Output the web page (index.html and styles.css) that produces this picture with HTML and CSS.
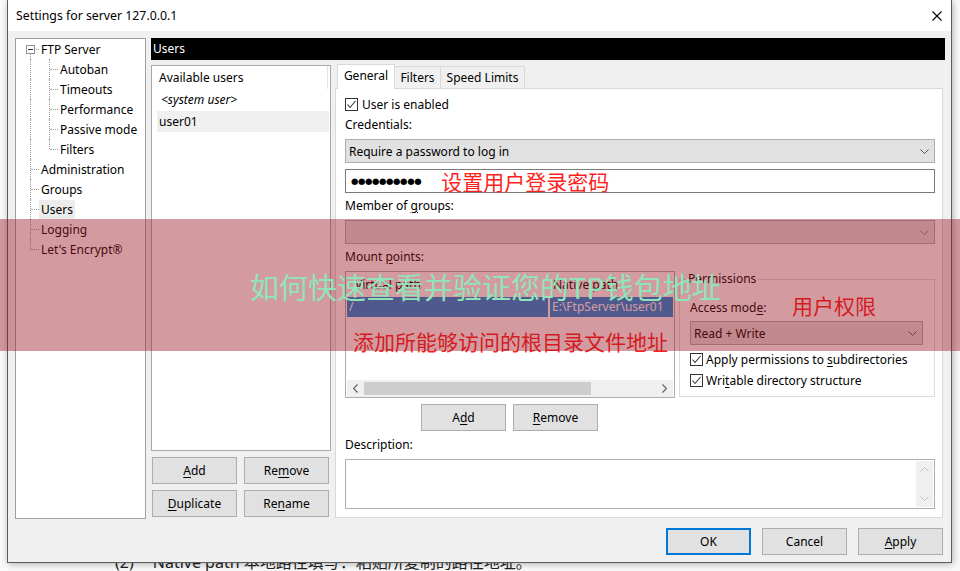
FILE: index.html
```html
<!DOCTYPE html>
<html lang="zh-CN">
<head>
    <meta charset="UTF-8">
    <meta name="viewport" content="width=device-width, initial-scale=1.0">
    <title>Settings for server 127.0.0.1</title>
    <link rel="stylesheet" href="styles.css">
</head>
<body>
    <div class="window">
        <div class="titlebar">
            <span class="title">Settings for server 127.0.0.1</span>
            <svg class="close" viewBox="0 0 10 10"><path d="M0.5 0.5L9.5 9.5M9.5 0.5L0.5 9.5"/></svg>
        </div>

        <div class="client">
            <div class="main">
                <!-- 左侧设置树 -->
                <div class="tree">
                    <div class="node"><span class="g m"><span class="minus"></span></span><span class="label">FTP Server</span></div>
                    <div class="node"><span class="g v"></span><span class="g t"></span><span class="label">Autoban</span></div>
                    <div class="node"><span class="g v"></span><span class="g t"></span><span class="label">Timeouts</span></div>
                    <div class="node"><span class="g v"></span><span class="g t"></span><span class="label">Performance</span></div>
                    <div class="node"><span class="g v"></span><span class="g t"></span><span class="label">Passive mode</span></div>
                    <div class="node"><span class="g v"></span><span class="g l"></span><span class="label">Filters</span></div>
                    <div class="node"><span class="g t"></span><span class="label">Administration</span></div>
                    <div class="node"><span class="g t"></span><span class="label">Groups</span></div>
                    <div class="node"><span class="g t"></span><span class="label selected">Users</span></div>
                    <div class="node"><span class="g t"></span><span class="label">Logging</span></div>
                    <div class="node"><span class="g l"></span><span class="label">Let's Encrypt®</span></div>
                </div>

                <div class="content">
                    <div class="page-title">Users</div>
                    <div class="page-body">
                        <div class="users-col">
                            <div class="users-list">
                                <div class="list-head">Available users</div>
                                <div class="list-item system">&lt;system user&gt;</div>
                                <div class="list-item selected">user01</div>
                            </div>
                            <div class="btn-grid">
                                <button class="btn"><u>A</u>dd</button>
                                <button class="btn">Re<u>m</u>ove</button>
                                <button class="btn"><u>D</u>uplicate</button>
                                <button class="btn">Re<u>n</u>ame</button>
                            </div>
                        </div>

                        <div class="tabs">
                            <div class="tab-strip">
                                <div class="tab active">General</div>
                                <div class="tab">Filters</div>
                                <div class="tab speed">Speed Limits</div>
                            </div>
                            <div class="tab-panel">
                                <div class="check-row">
                                    <span class="check"><svg viewBox="0 0 11 11"><path d="M1.5 5.5L4 8.5L9.5 2"/></svg></span>
                                    <span>User is enabled</span>
                                </div>
                                <div class="field-label">Credentials:</div>
                                <div class="select">
                                    <span>Require a password to log in</span>
                                    <svg class="chevron" viewBox="0 0 9 5"><path d="M0.5 0.5L4.5 4.5L8.5 0.5"/></svg>
                                </div>
                                <div class="input">
                                    <span class="dots">●●●●●●●●●●</span>
                                    <span class="note">设置用户登录密码</span>
                                </div>
                                <div class="field-label">Member of <u>g</u>roups:</div>
                                <div class="select disabled">
                                    <span></span>
                                    <svg class="chevron" viewBox="0 0 9 5"><path d="M0.5 0.5L4.5 4.5L8.5 0.5"/></svg>
                                </div>
                                <div class="field-label">Mount <u>p</u>oints:</div>

                                <div class="mount-row">
                                    <div class="mount-list">
                                        <div class="mount-head">
                                            <span class="col-virtual">Virtual path</span>
                                            <span class="col-native">Native path</span>
                                        </div>
                                        <div class="mount-item">
                                            <span class="col-virtual">/</span>
                                            <span class="col-native">E:\FtpServer\user01</span>
                                        </div>
                                        <div class="mount-space"></div>
                                        <div class="hscroll">
                                            <span class="arrow"><svg viewBox="0 0 5 9"><path d="M4.5 0.5L0.5 4.5L4.5 8.5"/></svg></span>
                                            <span class="thumb"></span>
                                            <span class="track"></span>
                                            <span class="arrow"><svg viewBox="0 0 5 9"><path d="M0.5 0.5L4.5 4.5L0.5 8.5"/></svg></span>
                                        </div>
                                        <span class="note note-mount">添加所能够访问的根目录文件地址</span>
                                    </div>

                                    <div class="group">
                                        <span class="legend">Permissions</span>
                                        <div class="group-label">Access mod<u>e</u>:</div>
                                        <div class="select perm-select">
                                            <span>Read + Write</span>
                                            <svg class="chevron" viewBox="0 0 9 5"><path d="M0.5 0.5L4.5 4.5L8.5 0.5"/></svg>
                                        </div>
                                        <div class="check-row perm-check">
                                            <span class="check"><svg viewBox="0 0 11 11"><path d="M1.5 5.5L4 8.5L9.5 2"/></svg></span>
                                            <span>Apply permissions to <u>s</u>ubdirectories</span>
                                        </div>
                                        <div class="check-row perm-check second">
                                            <span class="check"><svg viewBox="0 0 11 11"><path d="M1.5 5.5L4 8.5L9.5 2"/></svg></span>
                                            <span>Wri<u>t</u>able directory structure</span>
                                        </div>
                                        <span class="note note-perm">用户权限</span>
                                    </div>
                                </div>

                                <div class="mount-actions">
                                    <button class="btn">A<u>d</u>d</button>
                                    <button class="btn"><u>R</u>emove</button>
                                </div>

                                <div class="field-label">Description:</div>
                                <div class="textarea">
                                    <div class="vscroll">
                                        <svg viewBox="0 0 9 5"><path d="M0.5 4.5L4.5 0.5L8.5 4.5"/></svg>
                                        <svg viewBox="0 0 9 5"><path d="M0.5 0.5L4.5 4.5L8.5 0.5"/></svg>
                                    </div>
                                </div>
                            </div>
                        </div>
                    </div>
                </div>
            </div>

            <div class="footer">
                <button class="btn default">OK</button>
                <button class="btn">Cancel</button>
                <button class="btn"><u>A</u>pply</button>
            </div>
        </div>
    </div>

    <div class="doc-line"><span class="doc-num">(2)</span>Native path 本地路径填写：粘贴所复制的路径地址。</div>

    <div class="band"></div>
    <div class="watermark">如何快速查看并验证您的TP钱包地址</div>
</body>
</html>
```

FILE: styles.css
```css
* {
    margin: 0;
    padding: 0;
    box-sizing: border-box;
}

body {
    width: 960px;
    height: 571px;
    overflow: hidden;
    position: relative;
    background: #fafafa;
    font-family: 'Noto Sans', 'Noto Sans CJK SC', sans-serif;
    font-size: 12px;
    color: #000;
}

u {
    text-decoration: underline;
    text-underline-offset: 2px;
}

/* 窗口 */
.window {
    position: relative;
    z-index: 1;
    margin-left: 7px;
    width: 945px;
    height: 563px;
    background: #f0f0f0;
    border: 1px solid #5c5c5c;
    border-top: 0;
    box-shadow: 1px 1px 7px rgba(0, 0, 0, 0.3);
    display: flex;
    flex-direction: column;
}

.titlebar {
    height: 31px;
    background: #fff;
    display: flex;
    align-items: center;
    justify-content: space-between;
    padding: 0 9px 0 8px;
}

.title {
    font-size: 12.3px;
}

.close {
    width: 10px;
    height: 10px;
    fill: none;
    stroke: #000;
    stroke-width: 1.1;
}

.client {
    flex: 1;
    display: flex;
    flex-direction: column;
    padding: 7px 6px 0 7px;
}

.main {
    height: 481px;
    display: flex;
    gap: 5px;
}

/* 树 */
.tree {
    width: 131px;
    background: #fff;
    border: 1px solid #a0a0a0;
}

.node {
    height: 20px;
    display: flex;
    align-items: center;
    padding-left: 4px;
}

.g {
    position: relative;
    width: 19px;
    height: 20px;
    flex: none;
}

.g.v::before,
.g.t::before,
.g.l::before,
.g.m::before {
    content: '';
    position: absolute;
    left: 10px;
    top: 0;
    bottom: 0;
    border-left: 1px dotted #a0a0a0;
}

.g.l::before {
    bottom: 10px;
}

.g.m::before {
    top: 15px;
}

.g.t::after,
.g.l::after,
.g.m::after {
    content: '';
    position: absolute;
    left: 11px;
    right: 0;
    top: 10px;
    border-top: 1px dotted #a0a0a0;
}

.g.m::after {
    left: 16px;
}

.minus {
    position: absolute;
    left: 6px;
    top: 6px;
    width: 9px;
    height: 9px;
    border: 1px solid #919191;
    background: #fff;
}

.minus::after {
    content: '';
    position: absolute;
    left: 1px;
    top: 3px;
    width: 5px;
    height: 1px;
    background: #333;
}

.label {
    padding: 0 2px;
    line-height: 19px;
    white-space: nowrap;
}

.label.selected {
    background: #ececec;
}

/* 右侧内容 */
.content {
    flex: 1;
    display: flex;
    flex-direction: column;
}

.page-title {
    height: 22px;
    line-height: 22px;
    background: #000;
    color: #fff;
    padding-left: 2px;
}

.page-body {
    flex: 1;
    margin-top: 5px;
    display: flex;
    gap: 4px;
}

.users-col {
    width: 180px;
    display: flex;
    flex-direction: column;
}

.users-list {
    height: 386px;
    background: #fff;
    border: 1px solid #a9a9a9;
    padding: 0 1px 0 5px;
}

.list-head {
    height: 23px;
    line-height: 23px;
    padding-left: 2px;
    border-right: 1px solid #e5e5e5;
    margin-right: 1px;
}

.list-item {
    height: 21px;
    line-height: 21px;
    padding-left: 2px;
}

.list-item.system {
    font-style: italic;
    padding-left: 4px;
    height: 22px;
}

.list-item.selected {
    background: #f0f0f0;
}

.btn {
    height: 27px;
    background: #e1e1e1;
    border: 1px solid #adadad;
    font-family: inherit;
    font-size: 12px;
    color: #000;
}

.btn-grid {
    margin-top: 6px;
    padding-left: 1px;
    display: grid;
    grid-template-columns: 85px 85px;
    gap: 6px 7px;
}

/* 选项卡 */
.tabs {
    width: 608px;
    display: flex;
    flex-direction: column;
}

.tab-strip {
    height: 23px;
    display: flex;
    align-items: flex-end;
    padding-left: 2px;
}

.tab {
    height: 22px;
    width: 46px;
    line-height: 21px;
    text-align: center;
    background: #f0f0f0;
    border: 1px solid #d9d9d9;
    border-bottom: 0;
    border-left: 0;
}

.tab.active {
    position: relative;
    z-index: 1;
    width: 58px;
    height: 25px;
    margin-bottom: -1px;
    line-height: 22px;
    background: #fff;
    border-left: 1px solid #d9d9d9;
}

.tab.speed {
    width: 84px;
}

.tab-panel {
    height: 430px;
    background: #fff;
    border: 1px solid #d9d9d9;
    padding: 6px 7px 0 9px;
    display: flex;
    flex-direction: column;
}

.check-row {
    height: 18px;
    display: flex;
    align-items: center;
    gap: 4px;
}

.check {
    width: 13px;
    height: 13px;
    border: 1px solid #333;
    background: #fff;
    display: flex;
}

.check svg {
    width: 11px;
    height: 11px;
    fill: none;
    stroke: #333;
    stroke-width: 1.1;
}

.field-label {
    margin-top: 4px;
    height: 18px;
    line-height: 18px;
}

.check-row + .field-label {
    margin-top: 3px;
}

.select {
    margin-top: 5px;
    height: 24px;
    background: #e1e1e1;
    border: 1px solid #adadad;
    display: flex;
    align-items: center;
    justify-content: space-between;
    padding: 0 5px 0 3px;
}

.chevron {
    width: 9px;
    height: 5px;
    fill: none;
    stroke: #555;
    stroke-width: 1;
}

.select.disabled .chevron {
    stroke: #8a8a8a;
}

.input {
    margin-top: 6px;
    height: 24px;
    border: 1px solid #7a7a7a;
    display: flex;
    align-items: center;
    padding-left: 5px;
}

.dots {
    font-family: 'DejaVu Sans', sans-serif;
    font-size: 8.5px;
    letter-spacing: -0.4px;
}

.note {
    font-family: 'Noto Sans CJK SC', sans-serif;
    font-size: 21px;
    line-height: 24px;
    color: #ff1f1f;
    white-space: nowrap;
}

.input .note {
    margin-left: 20px;
}

/* 挂载点 */
.mount-row {
    margin-top: 5px;
    display: flex;
    align-items: flex-start;
    gap: 4px;
}

.mount-list {
    position: relative;
    width: 330px;
    height: 127px;
    background: #fff;
    border: 1px solid #adadad;
    padding: 0 1px;
    display: flex;
    flex-direction: column;
}

.mount-head {
    height: 25px;
    display: flex;
    align-items: center;
}

.mount-head .col-virtual {
    width: 201px;
    padding-left: 8px;
}

.mount-head .col-native {
    margin-left: 2px;
    padding-left: 3px;
}

.mount-item {
    height: 20px;
    line-height: 20px;
    display: flex;
    color: #fff;
}

.mount-item .col-virtual {
    width: 201px;
    padding-left: 2px;
    background: #1a8ce0;
}

.mount-item .col-native {
    flex: 1;
    margin-left: 2px;
    padding-left: 2px;
    background: #1a8ce0;
    white-space: nowrap;
    overflow: hidden;
}

.mount-space {
    flex: 1;
}

.hscroll {
    height: 17px;
    background: #f0f0f0;
    display: flex;
    align-items: center;
}

.hscroll .arrow {
    width: 17px;
    height: 17px;
    display: flex;
    align-items: center;
    justify-content: center;
}

.hscroll .arrow svg {
    width: 5px;
    height: 9px;
    fill: none;
    stroke: #606060;
    stroke-width: 1.2;
}

.hscroll .thumb {
    width: 227px;
    height: 13px;
    background: #cdcdcd;
}

.hscroll .track {
    flex: 1;
}

.note-mount {
    position: absolute;
    left: 7px;
    top: 57px;
}

.group {
    position: relative;
    margin-top: 8px;
    width: 256px;
    height: 118px;
    border: 1px solid #dcdcdc;
    padding: 19px 0 0 10px;
}

.legend {
    position: absolute;
    top: -9px;
    left: 6px;
    padding: 0 2px;
    line-height: 16px;
    background: #fff;
}

.group-label {
    height: 18px;
    line-height: 18px;
}

.perm-select {
    margin-top: 4px;
    width: 233px;
}

.perm-check {
    margin-top: 5px;
    gap: 3px;
}

.perm-check.second {
    margin-top: 3px;
}

.note-perm {
    position: absolute;
    left: 112px;
    top: 13px;
}

.mount-actions {
    margin-top: 6px;
    height: 28px;
    padding-left: 76px;
    display: flex;
    gap: 7px;
}

.mount-actions .btn {
    width: 85px;
}

.textarea {
    margin-top: 5px;
    height: 50px;
    border: 1px solid #adadad;
    display: flex;
    justify-content: flex-end;
    padding: 1px;
}

.vscroll {
    width: 17px;
    background: #f0f0f0;
    display: flex;
    flex-direction: column;
    justify-content: space-between;
    align-items: center;
    padding: 6px 0;
}

.vscroll svg {
    width: 9px;
    height: 5px;
    fill: none;
    stroke: #bfbfbf;
    stroke-width: 1;
}

/* 底部按钮 */
.footer {
    display: flex;
    justify-content: flex-end;
    gap: 11px;
    padding: 9px 2px 0 0;
}

.footer .btn {
    width: 85px;
}

.btn.default {
    border: 2px solid #0078d7;
}

/* 文档背景与水印 */
.doc-line {
    margin-top: -13px;
    padding-left: 115px;
    font-size: 16px;
    line-height: 24px;
    color: #222;
    white-space: nowrap;
}

.doc-num {
    margin-right: 19px;
}

.band {
    position: absolute;
    z-index: 2;
    left: 0;
    top: 219px;
    width: 960px;
    height: 132px;
    background: rgba(153, 24, 35, 0.43);
}

.watermark {
    position: absolute;
    z-index: 3;
    left: 250px;
    top: 271px;
    font-family: 'Noto Sans CJK SC', sans-serif;
    font-size: 29px;
    line-height: 30px;
    color: #8fe5b8;
    white-space: nowrap;
}
```
